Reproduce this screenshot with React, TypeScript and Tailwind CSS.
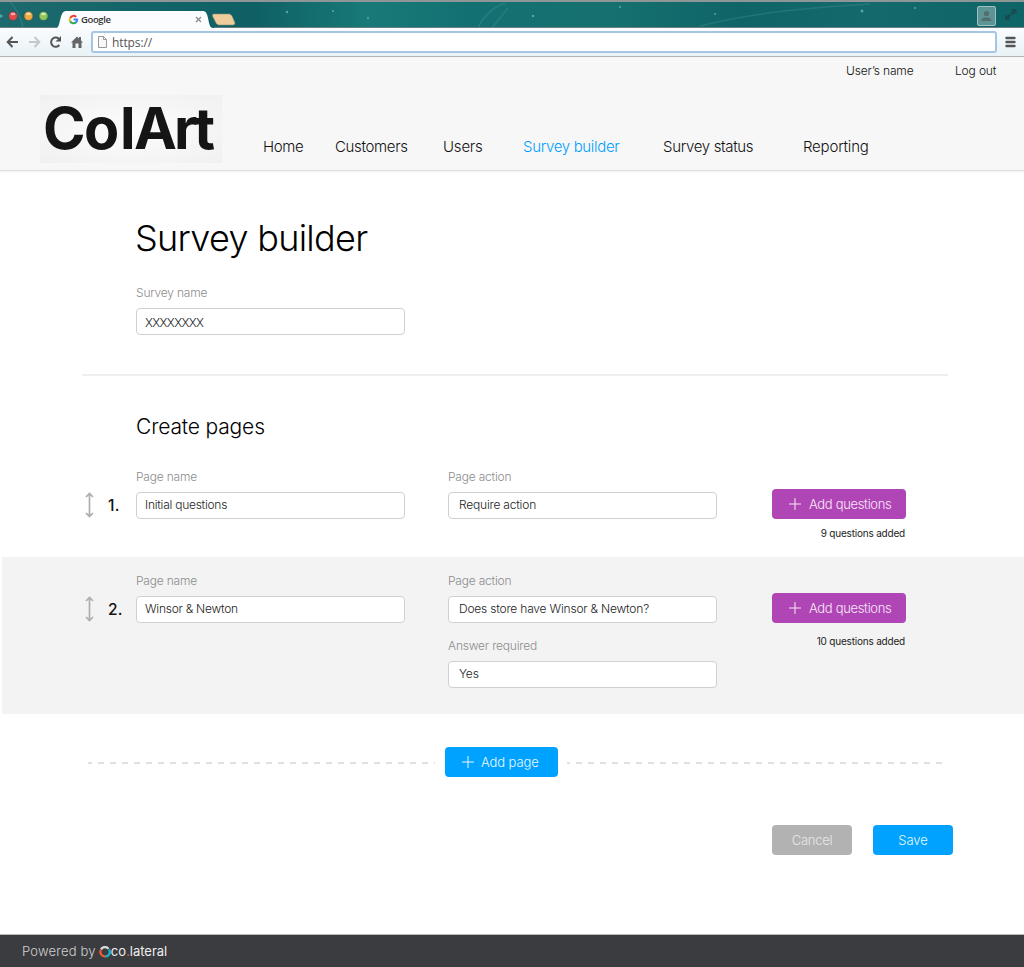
import React from "react";

function WindowBar() {
  return (
    <div className="relative h-7 overflow-hidden border-t-2 border-[#8f9696] bg-[linear-gradient(90deg,#1d6a6e_0%,#126468_15%,#0f6064_25%,#187a78_36%,#137072_46%,#16706f_60%,#0f6467_72%,#14696d_85%,#0f6468_100%)]">
      <svg className="absolute inset-0" width="1024" height="26" fill="none">
        <path d="M10 0Q20 10 23 26M478 26Q486 8 505 1M492 26L508 6M870 2Q760 8 700 24" stroke="#6fb5b3" strokeOpacity=".2" strokeWidth="1.5" />
        <g fill="#7fd0cd" fillOpacity=".6">
          <circle cx="287" cy="10" r="1.2" /><circle cx="333" cy="9" r="1" /><circle cx="368" cy="16" r="1" />
          <circle cx="533" cy="14" r="1.2" /><circle cx="620" cy="5" r="1" /><circle cx="715" cy="12" r="1" />
          <circle cx="862" cy="9" r="1.5" /><circle cx="915" cy="6" r="1" /><circle cx="1" cy="14" r="1.5" />
        </g>
        <path d="M0 25.5H56M214 25.5H1024" stroke="#6b7f80" />
        <path d="M56 26C61 26 59 9 66 9H203C210 9 207 26 213 26Z" fill="#fafcfe" />
        <path d="M214 12H229Q231 12 232 14L235 21Q235 23 233 23H219Q217 23 216 21L212.500 14Q212 12 214 12Z" fill="#efcc9c" stroke="#8b8e78" strokeWidth=".6" />
        <g strokeWidth="1" stroke="#234e50" strokeOpacity=".6">
          <circle cx="13" cy="14" r="4.500" fill="#e4484a" /><circle cx="28.500" cy="14" r="4.500" fill="#f0a83f" /><circle cx="43.500" cy="14" r="4.500" fill="#8fc85a" />
        </g>
        <g fill="#fff" fillOpacity=".6">
          <ellipse cx="13" cy="12" rx="2.300" ry="1.300" /><ellipse cx="28.500" cy="12" rx="2.300" ry="1.300" /><ellipse cx="43.500" cy="12" rx="2.300" ry="1.300" />
        </g>
        <g strokeWidth="2">
          <path d="M76.200 15A3.700 3.700 0 0 0 70.200 16" stroke="#ea4335" />
          <path d="M70.200 15.700A3.700 3.700 0 0 0 70.300 19.500" stroke="#fbbc05" />
          <path d="M70.200 19.300A3.700 3.700 0 0 0 76.100 20.300" stroke="#34a853" />
          <path d="M73.500 17.600H77.200A3.700 3.700 0 0 1 75.800 20.500" stroke="#4285f4" />
        </g>
        <path d="M196 15L201 20M201 15L196 20" stroke="#8a8d90" strokeWidth="1.300" />
        <rect x="977.500" y="4.500" width="18" height="19" rx="1.500" fill="#5d9596" stroke="#a0bfc0" />
        <path d="M981 19Q981.500 16 984 15.500H989Q991 16 991.500 19Z" fill="#566c6d" />
        <circle cx="986.500" cy="11.500" r="2.600" fill="#566c6d" />
        <path d="M1011 7H1016.500V12.500L1014.700 10.700L1012 13.300L1010.200 11.500L1012.800 8.900ZM1005 12.500L1006.800 14.300L1009.200 11.900L1011 13.700L1008.700 16.100L1010.500 18H1005Z" fill="#164b4f" />
      </svg>
      <span className="relative ml-[81px] mt-[10px] block font-['Open_Sans'] text-[9.500px] font-semibold leading-4 tracking-[-0.4px] text-[#333]">Google</span>
    </div>
  );
}

function AddressBar() {
  return (
    <div className="flex h-[29px] items-center border-b border-[#b5b5b5] bg-[linear-gradient(#fafcfe,#e9f2f6)]">
      <svg className="shrink-0" width="91" height="28" fill="none" stroke="#555" strokeWidth="2">
        <path d="M18 14H8M12.500 9L7.700 14L12.500 19" />
        <path d="M29 14H39M34.500 9L39.300 14L34.500 19" stroke="#c4c8ca" />
        <path d="M59.300 17A4.600 4.600 0 1 1 58.800 10.700" />
        <path d="M61 8V13.500H55.500Z" fill="#555" stroke="none" />
        <path d="M71 14.500L77 8.500L79 10.500V9H81V12.500L83 14.500H81.500V20H78.500V15.500H75.500V20H72.500V14.500Z" fill="#666" stroke="none" />
      </svg>
      <div className="flex h-[22px] w-[906px] shrink-0 items-center rounded-[3px] border-2 border-[#a6c5e3] bg-white pl-1">
        <svg width="15" height="18" fill="#f8f8f8" stroke="#999">
          <path d="M1.500 3.500H6.500L9.500 6.500V14.500H1.500ZM6.500 3.500V6.500H9.500" />
        </svg>
        <span className="pt-px font-['Open_Sans'] text-[12px] font-normal leading-4 tracking-[-0.1px] text-[#555]">https://</span>
      </div>
      <svg className="ml-2" width="11" height="14" stroke="#555" strokeWidth="2.400" strokeLinecap="round">
        <path d="M1.500 3H9.500M1.500 7H9.500M1.500 11H9.500" />
      </svg>
    </div>
  );
}

function Header() {
  return (
    <header className="h-[114px] border-b border-[#dedede] bg-[#f7f7f7] shadow-[0_1px_3px_rgba(0,0,0,0.06)]">
      <div className="flex h-[27px] items-center text-[12px] tracking-[-0.15px] text-[#111]">
        <a className="ml-[846px] w-[109px]">User’s name</a>
        <a>Log out</a>
      </div>
      <div className="mt-[11px] flex h-[68px] pl-10">
        <svg width="182" height="68" className="overflow-visible bg-[radial-gradient(#fdfdfd,#f0f0f0)]">
          <text x="3 44 80 94 134 154" y="54" fontSize="57.500" fontWeight="700" fontFamily="Inter, sans-serif" fill="#151515">ColArt</text>
        </svg>
        <nav className="flex items-center pt-[34px] text-[15px] leading-none tracking-[-0.33px] text-[#111]">
          <a className="ml-[41px] w-[72px]">Home</a>
          <a className="w-[108px]">Customers</a>
          <a className="w-20 tracking-[-0.2px]">Users</a>
          <a className="w-[140px] font-[350] text-[#009fff]">Survey builder</a>
          <a className="w-[140px]">Survey status</a>
          <a className="tracking-[-0.2px]">Reporting</a>
        </nav>
      </div>
    </header>
  );
}

function Field({ label, value, inset = "pl-[10px] tracking-[-0.2px]" }: { label: string; value: string; inset?: string }) {
  return (
    <label className="block w-[269px]">
      <span className="block h-[23px] text-[12px] leading-4 tracking-[-0.2px] text-[#8c8c8c]">{label}</span>
      <span className={`flex h-[27px] items-center rounded-[4px] border border-[#d0d0d0] bg-white pb-px text-[12px] font-[350] text-[#1c1c1c] ${inset}`}>{value}</span>
    </label>
  );
}

function Plus() {
  return (
    <svg width="12" height="12" stroke="currentColor" strokeWidth="1"><path d="M6 0V12M0 6H12" /></svg>
  );
}

function PageRow({ n, name, action, count, answer, countGap }: { n: number; name: string; action: string; count: number; answer?: string; countGap: string }) {
  return (
    <div className="flex">
      <svg className="mt-[23px] ml-[84px]" width="11" height="26" fill="none" stroke="#aeaeae" strokeWidth="1.700">
        <path d="M5.500 2V24M2 5L5.500 1.500L9 5M2 21L5.500 24.500L9 21" />
      </svg>
      <span className="mt-[27px] ml-[13px] w-7 text-[15.500px] font-medium leading-5 tracking-[0.3px] text-[#111]">{n}.</span>
      <Field label="Page name" value={name} inset="pl-2 tracking-[-0.25px]" />
      <div className="ml-[43px] flex flex-col gap-[15px]">
        <Field label="Page action" value={action} />
        {answer && <Field label="Answer required" value={answer} />}
      </div>
      <div className="mt-5 ml-[55px] w-[134px]">
        <button className="flex h-[30px] w-full items-center gap-2 rounded-[4px] bg-[#b045b5] pl-[17px] text-[13px] tracking-[-0.33px] text-[#f7e8f8]">
          <Plus />
          <span className="pt-px">Add questions</span>
        </button>
        <p className={`pr-px text-right text-[10px] font-normal leading-3 tracking-[-0.2px] text-[#222] ${countGap}`}>{count} questions added</p>
      </div>
    </div>
  );
}

export default function App() {
  return (
    <div className="flex h-[967px] w-[1024px] flex-col overflow-hidden bg-white font-['Inter','Liberation_Sans',sans-serif] font-light">
      <WindowBar />
      <AddressBar />
      <Header />
      <main className="flex-1">
        <section className="ml-[136px] pt-11">
          <h1 className="-ml-px text-[36px] leading-[46px] tracking-[-0.7px]">Survey builder</h1>
          <div className="mt-6"><Field label="Survey name" value="XXXXXXXX" inset="pl-2 pt-1 tracking-[-0.65px]" /></div>
        </section>
        <div className="mt-[39px] ml-[82px] h-[2px] w-[866px] bg-[#eee]" />
        <h2 className="mt-[39px] ml-[136px] text-[21px] leading-6 tracking-[-0.15px]">Create pages</h2>
        <div className="mt-[30px] h-[88px]">
          <PageRow n={1} name="Initial questions" action="Require action" count={9} countGap="mt-2" />
        </div>
        <div className="ml-[2px] h-[156.500px] bg-[#f3f3f3] pt-4">
          <div className="-ml-[2px]">
            <PageRow n={2} name="Winsor & Newton" action="Does store have Winsor & Newton?" answer="Yes" count={10} countGap="mt-[11.500px]" />
          </div>
        </div>
        <div className="mt-[33.500px] ml-[88px] flex w-[860px] items-center">
          <svg className="mt-[2px]" width="347" height="2" stroke="#d8d8d8" strokeWidth="1.500" strokeDasharray="6 6"><path d="M-2 1H347" /></svg>
          <button className="mr-[9px] ml-[10px] flex h-[30px] w-[113px] items-center gap-[7px] rounded-[4px] bg-[#00a2ff] pl-[17px] text-[13px] tracking-[-0.1px] text-[#e8f7ff]">
            <Plus />
            <span className="pt-px">Add page</span>
          </button>
          <svg className="mt-[2px]" width="381" height="2" stroke="#d8d8d8" strokeWidth="1.500" strokeDasharray="6 6"><path d="M-3 1H381" /></svg>
        </div>
        <div className="mt-12 ml-[772px] flex gap-[21px] text-[13px] tracking-[-0.3px]">
          <button className="h-[30px] w-20 rounded-[4px] bg-[#b2b2b2] pt-px text-[#e8e8e8]">Cancel</button>
          <button className="h-[30px] w-20 rounded-[4px] bg-[#00a2ff] pt-px tracking-[-0.1px] text-[#e8f7ff]">Save</button>
        </div>
      </main>
      <footer className="flex h-[33px] items-center border-t border-[#b9b9ba] bg-[#3b3c40] pt-px pl-[22px] text-[13px] text-[#d0d0d0]">
        <span className="tracking-[0.2px]">Powered by</span>
        <svg className="ml-[3px]" width="12" height="12" fill="none" strokeWidth="2.300">
          <path d="M2 3.500A4.300 4.300 0 0 1 9.500 3" stroke="#d5d9da" />
          <path d="M10 3.500A4.300 4.300 0 0 1 6 10.300" stroke="#18b3c6" />
          <path d="M6 10.300A4.300 4.300 0 0 1 1.900 4" stroke="#f0592a" />
        </svg>
        <span className="font-normal text-[#eee]">co<span className="text-[#f0592a]">.</span>lateral</span>
      </footer>
    </div>
  );
}
